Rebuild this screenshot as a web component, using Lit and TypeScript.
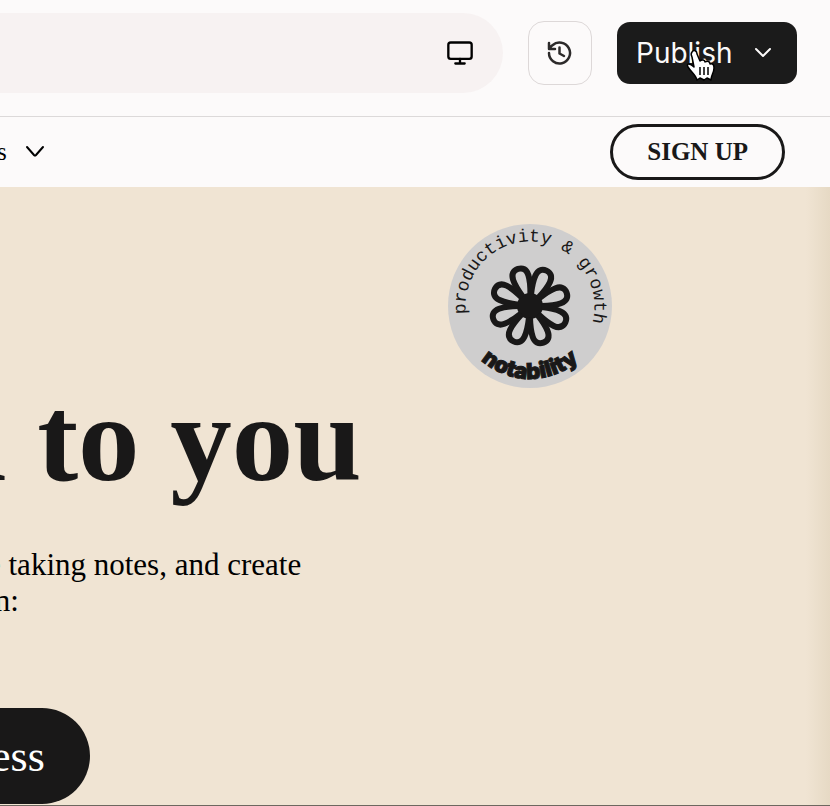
import { LitElement, html, css, svg } from "lit";
import { customElement } from "lit/decorators.js";

const PETAL_ANGLES = [25, 70, 115, 160, 205, 250, 296, 342];

@customElement("round-badge")
class RoundBadge extends LitElement {
  static styles = css`
    :host {
      display: block;
    }
    .badge {
      display: block;
      width: 100%;
    }
    .disc {
      fill: #cfcece;
    }
    .top {
      font: 18px "Liberation Mono", monospace;
      fill: #191818;
    }
    .bottom {
      font: 900 22px Inter, sans-serif;
      fill: #191818;
      stroke: #191818;
      stroke-width: 1;
    }
    .petal {
      fill: none;
      stroke: #191818;
      stroke-width: 6;
      stroke-linejoin: round;
    }
  `;

  render() {
    return html`<svg class="badge" viewBox="-82 -82 164 164">
      <defs>
        <path id="over" d="M-64 8A64.500 64.500 0 0 1 0 -64.500A64.500 64.500 0 0 1 56 32" />
        <path id="under" d="M-73 0A73 73 0 0 0 73 0" />
      </defs>
      <circle class="disc" r="82" />
      <text class="top"><textPath href="#over">productivity &amp; growth</textPath></text>
      <text class="bottom" text-anchor="middle">
        <textPath href="#under" startOffset="50%">notability</textPath>
      </text>
      <circle r="13" fill="#191818" />
      ${PETAL_ANGLES.map(
        (a) => svg`<path class="petal" transform="rotate(${a})"
          d="M-4 -11C-6 -17 -8 -23 -8 -30C-8 -36 -5 -39 0 -39S8 -36 8 -30C8 -23 6 -17 4 -11" />`
      )}
    </svg>`;
  }
}

@customElement("app-root")
class AppRoot extends LitElement {
  static styles = css`
    :host {
      display: flex;
      flex-direction: column;
      min-height: 100vh;
      overflow: hidden;
      box-sizing: border-box;
      border-bottom: 1px solid #6d675f;
      background: #fcfafa;
      color: #191818;
      font-family: "Liberation Serif", serif;
    }
    button {
      font: inherit;
      color: inherit;
      background: none;
      border: 0;
      padding: 0;
      margin: 0;
      display: flex;
      align-items: center;
      box-sizing: border-box;
    }
    .icon {
      display: block;
      flex: none;
      fill: none;
      stroke: currentColor;
      stroke-width: 2;
      stroke-linecap: round;
      stroke-linejoin: round;
    }
    .toolbar {
      display: flex;
      align-items: center;
      gap: 25px;
      padding: 13px 33px 23px 0;
      border-bottom: 1px solid #dcd9d9;
    }
    .address {
      flex: 1;
      height: 80px;
      display: flex;
      align-items: center;
      justify-content: flex-end;
      padding-right: 29px;
      box-sizing: border-box;
      border-radius: 0 40px 40px 0;
      background: #f7f2f2;
      color: #000;
    }
    .history {
      width: 64px;
      height: 64px;
      justify-content: center;
      border: 1px solid #ddd8d8;
      border-radius: 16px;
      color: #2c2a2a;
    }
    .publish {
      position: relative;
      width: 180px;
      height: 62px;
      justify-content: space-between;
      padding: 0 24px 0 19px;
      border-radius: 13px;
      background: #1b1b1b;
      color: #fcfafa;
      font: 28px Inter, sans-serif;
    }
    .cursor {
      position: absolute;
      left: 68px;
      top: 26px;
    }
    .nav {
      display: flex;
      align-items: center;
      justify-content: space-between;
      height: 70px;
      padding-right: 45px;
    }
    .menu {
      gap: 18px;
      margin-left: -3px;
      font-size: 25px;
      color: #000;
    }
    .signup {
      height: 56px;
      padding: 0 34px;
      border: 3px solid #191818;
      border-radius: 28px;
      font-size: 25px;
      font-weight: 700;
    }
    .hero {
      flex: 1;
      display: flex;
      align-items: flex-start;
      background: linear-gradient(to left, #e6d9c4, #f0e4d3 24px);
    }
    .copy {
      flex: 1;
      padding-top: 182px;
    }
    .title {
      margin: 0 0 0 -62px;
      font-size: 123px;
      line-height: 140px;
      font-weight: 700;
      white-space: nowrap;
    }
    .lead {
      margin: 38px 0 0 -13px;
      font-size: 31px;
      line-height: 36px;
      color: #000;
      white-space: pre;
    }
    .cta {
      height: 96px;
      margin: 89px 0 0 -9px;
      padding: 0 45px 0 0;
      border-radius: 0 48px 48px 0;
      background: #191818;
      color: #fff;
      font-size: 44px;
    }
    .stamp {
      width: 164px;
      margin: 37px 218px 0 0;
    }
  `;

  render() {
    return html`
      <header class="toolbar">
        <div class="address">
          <button aria-label="Desktop view">
            <svg class="icon" width="28" height="28" viewBox="0 0 24 24">
              <rect x="2" y="3" width="20" height="14" rx="2" />
              <path d="M12 17v4M8 21h8" />
            </svg>
          </button>
        </div>
        <button class="history" aria-label="History">
          <svg class="icon" width="28" height="28" viewBox="0 0 28 28">
            <path
              stroke-width="2.500"
              d="M3 14a10.500 10.500 0 1 0 3.500 -7.800L3 9.500M3 4v6H9M13.500 8.500v6l4.500 2.500"
            />
          </svg>
        </button>
        <button class="publish">
          Publish
          <svg class="icon" width="20" height="20" viewBox="0 0 20 20">
            <path d="M3 6l7 7 7-7" />
          </svg>
          <svg class="cursor" width="32" height="36" viewBox="0 0 32 36">
            <path
              d="M7 4C9 1 12 3 12 6L15 13C17 11 20 12 20 14C23 12 25 14 25 16C28 15 29 17 29 20C29 25 26 27 26 32L22 30L19 32L15 30L12 32C11 27 6 24 3 19C1 15 5 15 9 19L7 9C6 7 6 5 7 4Z"
              fill="#fff" stroke="#000" stroke-width="1.500" stroke-linejoin="round"
            />
            <path d="M15 19v8M19 19v8M23 19v8" stroke="#000" stroke-width="1.500" />
          </svg>
        </button>
      </header>
      <nav class="nav">
        <button class="menu">
          s
          <svg class="icon" width="20" height="20" viewBox="0 0 20 20">
            <path d="M2 5l7 8q1 1 2 0l7-8" />
          </svg>
        </button>
        <button class="signup">SIGN UP</button>
      </nav>
      <main class="hero">
        <section class="copy">
          <h1 class="title">n to you</h1>
          <p class="lead">e taking notes, and create<br />&nbsp;n:</p>
          <button class="cta">ess</button>
        </section>
        <round-badge class="stamp"></round-badge>
      </main>
    `;
  }
}
